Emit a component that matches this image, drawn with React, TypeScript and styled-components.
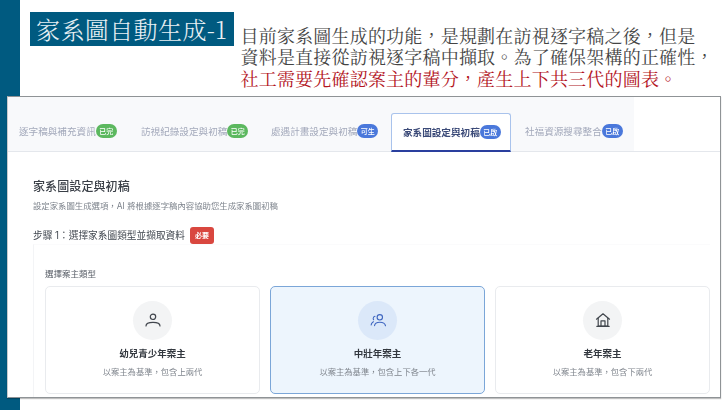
import React from "react";
import styled, { createGlobalStyle } from "styled-components";

const Global = createGlobalStyle`
  html, body { margin: 0; padding: 0; background: #fff; }
  * { box-sizing: border-box; }
`;

const SERIF = `"Noto Serif CJK TC", "Liberation Serif", "Noto Sans CJK TC", serif`;
const SANS = `Inter, "Noto Sans CJK TC", sans-serif`;

const Page = styled.div`
  width: 728px;
  height: 410px;
  overflow: hidden;
  display: grid;
  grid-template-columns: 20px 1fr;
  background: #fff;
`;
const SideBar = styled.div`
  background: #005a80;
`;
const Main = styled.main`
  display: flex;
  flex-direction: column;
  min-width: 0;
`;
const Header = styled.header`
  height: 96px;
  padding: 12px 0 0 10px;
  display: flex;
  gap: 7px;
  font-family: ${SERIF};
`;
const SlideTitle = styled.h1`
  margin: 0;
  width: 204px;
  height: 34px;
  background: #005a80;
  color: #e8f0f4;
  font-size: 24px;
  font-weight: 300;
  line-height: 34px;
  letter-spacing: 0.4px;
  padding-left: 6px;
  white-space: nowrap;
`;
const Intro = styled.div`
  padding-top: 12.5px;
  margin-left: -0.5px;
  font-size: 18px;
  line-height: 21.5px;
  letter-spacing: 0.2px;
  color: #444;
  white-space: nowrap;
`;
const Red = styled.span`
  color: #b3141d;
`;
const Window = styled.section`
  position: relative;
  margin-left: -13px;
  width: 714px;
  height: 302px;
  background: #fff;
  border: 1px solid #8f9396;
  border-left-color: #c8cacc;
  box-shadow: 0 1px 1px rgba(0, 0, 0, 0.25);
  font-family: ${SANS};
  display: flex;
  flex-direction: column;
  overflow: hidden;
  filter: blur(0.3px);
`;
const TabBar = styled.nav`
  height: 55px;
  flex: none;
  display: flex;
  align-items: flex-end;
  border-bottom: 1px solid #e4e7ec;
`;
const TabStrip = styled.div`
  display: flex;
  align-items: flex-end;
  height: 54px;
  width: 626px;
  background: #f8f9fb;
  padding-left: 11px;
`;
const Tab = styled.div<{ $active?: boolean; $w: number; $pad?: number }>`
  width: ${(p) => p.$w}px;
  height: ${(p) => (p.$active ? 39 : 38)}px;
  margin-bottom: ${(p) => (p.$active ? -1 : 0)}px;
  display: flex;
  align-items: center;
  justify-content: flex-start;
  padding-left: ${(p) => p.$pad ?? 0}px;
  padding-bottom: ${(p) => (p.$active ? 1 : 2)}px;
  font-size: 9.6px;
  font-weight: ${(p) => (p.$active ? 600 : 400)};
  color: ${(p) => (p.$active ? "#3b4a78" : "#a3a9bb")};
  white-space: nowrap;
  background: ${(p) => (p.$active ? "#fff" : "transparent")};
  border: ${(p) => (p.$active ? "1px solid #a9c3ec" : "none")};
  border-bottom: ${(p) => (p.$active ? "2px solid #2a3f9e" : "none")};
  border-radius: ${(p) => (p.$active ? "3px 3px 0 0" : "0")};
`;
const Pill = styled.span<{ $tone: "green" | "blue" }>`
  display: inline-flex;
  align-items: center;
  justify-content: center;
  flex: none;
  width: 21px;
  height: 14px;
  border-radius: 7px;
  font-size: 7px;
  font-weight: 500;
  color: #fff;
  background: ${(p) => (p.$tone === "green" ? "#5cb85f" : "#4a78db")};
`;
const Content = styled.div`
  padding: 26px 10px 0 25px;
  display: flex;
  flex-direction: column;
  flex: 1;
  min-height: 0;
`;
const PanelTitle = styled.h2`
  margin: 0;
  font-size: 12px;
  font-weight: 500;
  line-height: 17px;
  letter-spacing: 0.1px;
  color: #3a3f47;
`;
const PanelSub = styled.p`
  margin: 5px 0 0;
  font-size: 8.4px;
  line-height: 12px;
  color: #7d838c;
`;
const StepRow = styled.div`
  margin-top: 14px;
  display: flex;
  align-items: center;
  gap: 5px;
  height: 18px;
  font-size: 9.7px;
  color: #444a52;
`;
const Required = styled.span`
  width: 24px;
  height: 17px;
  border-radius: 3px;
  background: #d9473f;
  color: #fff;
  font-size: 7px;
  font-weight: 600;
  display: flex;
  align-items: center;
  justify-content: center;
`;
const StepBox = styled.div`
  flex: 1;
  border-left: 1px solid #f3f4f6;
  border-top: 1px solid #fbfbfc;
  padding: 23px 0 0 11px;
`;
const FieldLabel = styled.div`
  font-size: 8.5px;
  line-height: 12px;
  color: #555b64;
  margin-bottom: 6px;
`;
const Cards = styled.div`
  display: grid;
  grid-template-columns: repeat(3, 215px);
  column-gap: 10px;
`;
const Card = styled.div<{ $active?: boolean }>`
  height: 108px;
  border-radius: 5px;
  border: 1px solid ${(p) => (p.$active ? "#7ba6d8" : "#e9ebee")};
  background: ${(p) => (p.$active ? "#edf5fd" : "#fff")};
  display: flex;
  flex-direction: column;
  align-items: center;
  padding-top: 14px;
`;
const IconCircle = styled.div<{ $active?: boolean }>`
  width: 39px;
  height: 39px;
  border-radius: 50%;
  background: ${(p) => (p.$active ? "#dbe8f9" : "#f3f4f5")};
  color: ${(p) => (p.$active ? "#3f66c0" : "#41464d")};
  display: flex;
  align-items: center;
  justify-content: center;
`;
const CardTitle = styled.div`
  margin-top: 7px;
  font-size: 9.5px;
  font-weight: 600;
  line-height: 14px;
  color: #33383f;
`;
const CardDesc = styled.div`
  margin-top: 5px;
  font-size: 8.3px;
  line-height: 12px;
  color: #80868e;
`;

const Person = () => (
  <svg width="16" height="16" viewBox="0 0 16 16" fill="none" stroke="currentColor" strokeWidth="1.2" strokeLinecap="round">
    <circle cx="8" cy="3.800" r="2.700" />
    <path d="M1 13c0-2.400 3-3.600 7-3.600s7 1.200 7 3.600" />
  </svg>
);
const People = () => (
  <svg width="16" height="16" viewBox="0 0 16 16" fill="none" stroke="currentColor" strokeWidth="1.1" strokeLinecap="round">
    <circle cx="9.800" cy="4.300" r="2.700" />
    <path d="M4.500 12.800c.3-2.400 2.500-3.600 5.300-3.600s5.300 1.200 5.700 3.600" />
    <path d="M5 3.300a2.200 2.200 0 0 0-1.400 3.400M1.200 12c.2-1.500 1-2.700 2.300-3.300" strokeDasharray="2 0.800" />
  </svg>
);
const House = () => (
  <svg width="16" height="16" viewBox="0 0 16 16" fill="none" stroke="currentColor" strokeWidth="1.2" strokeLinejoin="round" strokeLinecap="round">
    <path d="M1.500 6.200 8 .8l6.500 5.400" />
    <path d="M3.200 5.200v7.800h9.600V5.200" />
    <path d="M6 13V7.800h4V13" />
    <path d="M1.800 13.300h12.400" />
  </svg>
);

export default function App() {
  return (
    <Page lang="zh-TW">
      <Global />
      <SideBar />
      <Main>
        <Header>
          <SlideTitle>家系圖自動生成-1</SlideTitle>
          <Intro>
            目前家系圖生成的功能，是規劃在訪視逐字稿之後，但是
            <br />
            資料是直接從訪視逐字稿中擷取。為了確保架構的正確性，
            <br />
            <Red>社工需要先確認案主的輩分，產生上下共三代的圖表。</Red>
          </Intro>
        </Header>
        <Window>
          <TabBar>
            <TabStrip>
              <Tab $w={122}>逐字稿與補充資訊<Pill $tone="green">已完</Pill></Tab>
              <Tab $w={130}>訪視紀錄設定與初稿<Pill $tone="green">已完</Pill></Tab>
              <Tab $w={120}>處遇計畫設定與初稿<Pill $tone="blue">可生</Pill></Tab>
              <Tab $active $w={120} $pad={11}>家系圖設定與初稿<Pill $tone="blue">已啟</Pill></Tab>
              <Tab $w={121} $pad={14}>社福資源搜尋整合<Pill $tone="blue">已啟</Pill></Tab>
            </TabStrip>
          </TabBar>
          <Content>
            <PanelTitle>家系圖設定與初稿</PanelTitle>
            <PanelSub>設定家系圖生成選項，AI 將根據逐字稿內容協助您生成家系圖初稿</PanelSub>
            <StepRow>
              步驟 1：選擇家系圖類型並擷取資料
              <Required>必要</Required>
            </StepRow>
            <StepBox>
              <FieldLabel>選擇案主類型</FieldLabel>
              <Cards>
                <Card>
                  <IconCircle><Person /></IconCircle>
                  <CardTitle>幼兒青少年案主</CardTitle>
                  <CardDesc>以案主為基準，包含上兩代</CardDesc>
                </Card>
                <Card $active>
                  <IconCircle $active><People /></IconCircle>
                  <CardTitle>中壯年案主</CardTitle>
                  <CardDesc>以案主為基準，包含上下各一代</CardDesc>
                </Card>
                <Card>
                  <IconCircle><House /></IconCircle>
                  <CardTitle>老年案主</CardTitle>
                  <CardDesc>以案主為基準，包含下兩代</CardDesc>
                </Card>
              </Cards>
            </StepBox>
          </Content>
        </Window>
      </Main>
    </Page>
  );
}
